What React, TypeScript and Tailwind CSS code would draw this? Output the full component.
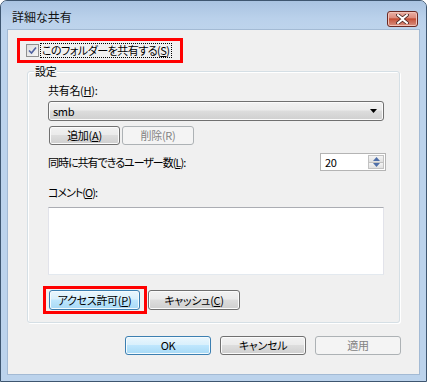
import React from "react";

const U = ({ c }: { c: string }) => (
  <span className="underline underline-offset-[1px] decoration-1">{c}</span>
);

const btnBase =
  "h-[19px] rounded-[3px] border flex items-center justify-center text-[11px] leading-none";
const btnNormal =
  "border-[#707070] bg-[linear-gradient(#f2f2f2_0%,#ebebeb_45%,#dddddd_50%,#cfcfcf_100%)] shadow-[inset_0_0_0_1px_#fbfbfb] text-black";
const btnBlue =
  "border-[#3c7fb1] bg-[linear-gradient(#eaf6fd_0%,#d9f0fc_45%,#bee6fd_50%,#a7d9f5_100%)] shadow-[inset_0_0_0_1px_#f4fbfe] text-black";
const btnDisabled = "border-[#adb2b5] bg-[#f4f4f4] text-[#838383]";

export default function App() {
  return (
    <div className="w-[427px] h-[382px] font-['Noto_Sans_CJK_JP','Noto_Sans',sans-serif] text-[11px] tracking-[-0.3px] [font-feature-settings:'palt'] text-black">
      <div className="w-[427px] h-[382px] rounded-t-[7px] border border-[#3e5670] bg-[#bcd3ec] flex flex-col overflow-hidden">
        {/* Title bar */}
        <div className="h-[29px] shrink-0 flex items-start bg-[linear-gradient(#a9c3e1,#bad1eb_60%,#bed4ec)]">
          <div className="ml-[11px] mt-[8px] text-[12px] tracking-normal leading-[16px] text-[#111]">詳細な共有</div>
          <div className="ml-auto mr-[8px] mt-[10px] w-[31px] h-[16px] rounded-[3px] border border-[#6b2a24] bg-[linear-gradient(#eab1a6_0%,#dd8d7f_40%,#c4492f_50%,#c9604a_60%,#d88f80_100%)] shadow-[inset_0_0_0_1px_#f1c2b8] flex items-center justify-center">
            <svg width="13" height="10" viewBox="0 0 13 10">
              <path
                d="M2 1 L6.5 4.6 L11 1 M2 9 L6.5 5.4 L11 9"
                stroke="#4a2420"
                strokeWidth="3.6"
                fill="none"
                strokeLinecap="square"
              />
              <path
                d="M2 1 L6.5 4.6 L11 1 M2 9 L6.5 5.4 L11 9"
                stroke="#ffffff"
                strokeWidth="2"
                fill="none"
                strokeLinecap="square"
              />
            </svg>
          </div>
        </div>

        {/* Body with side frames */}
        <div className="flex-1 flex px-[7px] pb-[7px]">
          <div className="flex-1 bg-[#f0f0f0] shadow-[0_0_0_1px_#a3bad4] flex flex-col">
            {/* Share checkbox in red box */}
            <div className="ml-[9px] mt-[8px] w-[166px] h-[25px] border-[3px] border-[#ff0000] flex items-center pl-[6px]">
              <div className="w-[13px] h-[13px] border border-[#8f8f8f] bg-[linear-gradient(135deg,#dcdcdc,#f6f6f6)] flex items-center justify-center">
                <svg width="9" height="9" viewBox="0 0 9 9">
                  <path d="M1 4.5 L3.5 7 L8 1.5" stroke="#5062a0" strokeWidth="1.6" fill="none" />
                </svg>
              </div>
              <div className="ml-[1px] border border-dotted border-black h-[15px] px-[1px] flex items-center leading-none whitespace-nowrap tracking-[-0.5px]">
                このフォルダーを共有する(<U c="S" />)
              </div>
            </div>

            {/* Group box */}
            <div className="relative ml-[19px] mt-[8px] w-[373px] h-[252px] rounded-[3px] border border-[#d5dfe5] shadow-[inset_1px_1px_0_#ffffff,1px_1px_0_#ffffff] flex flex-col pl-[20px]">
              <div className="absolute left-[6px] top-[-8px] px-[1px] bg-[#f0f0f0] leading-[14px]">設定</div>

              <div className="mt-[11px] leading-[14px] whitespace-nowrap">
                共有名(<U c="H" />):
              </div>

              {/* Combobox */}
              <div className="mt-[4px] w-[336px] h-[20px] rounded-[3px] border border-[#707070] bg-[linear-gradient(#f2f2f2_0%,#ebebeb_45%,#dddddd_50%,#cfcfcf_100%)] shadow-[inset_0_0_0_1px_#fbfbfb] flex items-center pl-[4px] pr-[6px]">
                <span className="leading-none">smb</span>
                <svg className="ml-auto" width="7" height="4" viewBox="0 0 7 4">
                  <path d="M0 0 H7 L3.5 4 Z" fill="#000" />
                </svg>
              </div>

              {/* Add / Delete */}
              <div className="mt-[5px] flex">
                <div className={`${btnBase} ${btnNormal} ml-[1px] w-[71px]`}>
                  追加(<U c="A" />)
                </div>
                <div className={`${btnBase} ${btnDisabled} ml-[2px] w-[72px]`}>削除(R)</div>
              </div>

              {/* Concurrent users */}
              <div className="mt-[8px] flex items-center h-[18px]">
                <span className="leading-none whitespace-nowrap tracking-[-1px]">
                  同時に共有できるユーザー数(<U c="L" />):
                </span>
                <div className="ml-auto mr-[13px] w-[66px] h-[18px] border border-[#b4b4b4] bg-white flex">
                  <span className="pl-[4px] flex items-center leading-none">20</span>
                  <div className="ml-auto mr-[1px] my-[1px] w-[16px] flex flex-col border border-[#c2c2c2]">
                    <div className="flex-1 flex items-center justify-center bg-[linear-gradient(#f4f4f4,#e0e0e0)] border-b border-[#c2c2c2]">
                      <svg width="7" height="4" viewBox="0 0 7 4">
                        <path d="M0 4 H7 L3.5 0 Z" fill="#4f6fa8" />
                      </svg>
                    </div>
                    <div className="flex-1 flex items-center justify-center bg-[linear-gradient(#f4f4f4,#e0e0e0)]">
                      <svg width="7" height="4" viewBox="0 0 7 4">
                        <path d="M0 0 H7 L3.5 4 Z" fill="#4f6fa8" />
                      </svg>
                    </div>
                  </div>
                </div>
              </div>

              <div className="mt-[14px] leading-[14px] whitespace-nowrap tracking-[-1px]">
                コメント(<U c="O" />):
              </div>

              {/* Comment box */}
              <div className="mt-[8px] w-[336px] h-[68px] bg-white border border-[#e2e3ea] border-t-[#abadb3] border-b-[#e3e9ef]" />

              {/* Permissions / Caching */}
              <div className="mt-[11px] flex items-center">
                <div className="-ml-[5px] w-[104px] h-[28px] border-[3px] border-[#ff0000] flex items-center pl-[3px]">
                  <div className={`${btnBase} ${btnBlue} w-[91px] h-[20px]`}>
                    アクセス許可(<U c="P" />)
                  </div>
                </div>
                <div className={`${btnBase} ${btnNormal} ml-[1px] w-[92px] h-[20px]`}>
                  キャッシュ(<U c="C" />)
                </div>
              </div>
            </div>

            {/* Bottom buttons */}
            <div className="mt-[13px] flex ml-[117px]">
              <div className={`${btnBase} ${btnBlue} w-[86px]`}>OK</div>
              <div className={`${btnBase} ${btnNormal} ml-[9px] w-[86px]`}>キャンセル</div>
              <div className={`${btnBase} ${btnDisabled} ml-[9px] w-[86px]`}>適用</div>
            </div>
          </div>
        </div>
      </div>
    </div>
  );
}
